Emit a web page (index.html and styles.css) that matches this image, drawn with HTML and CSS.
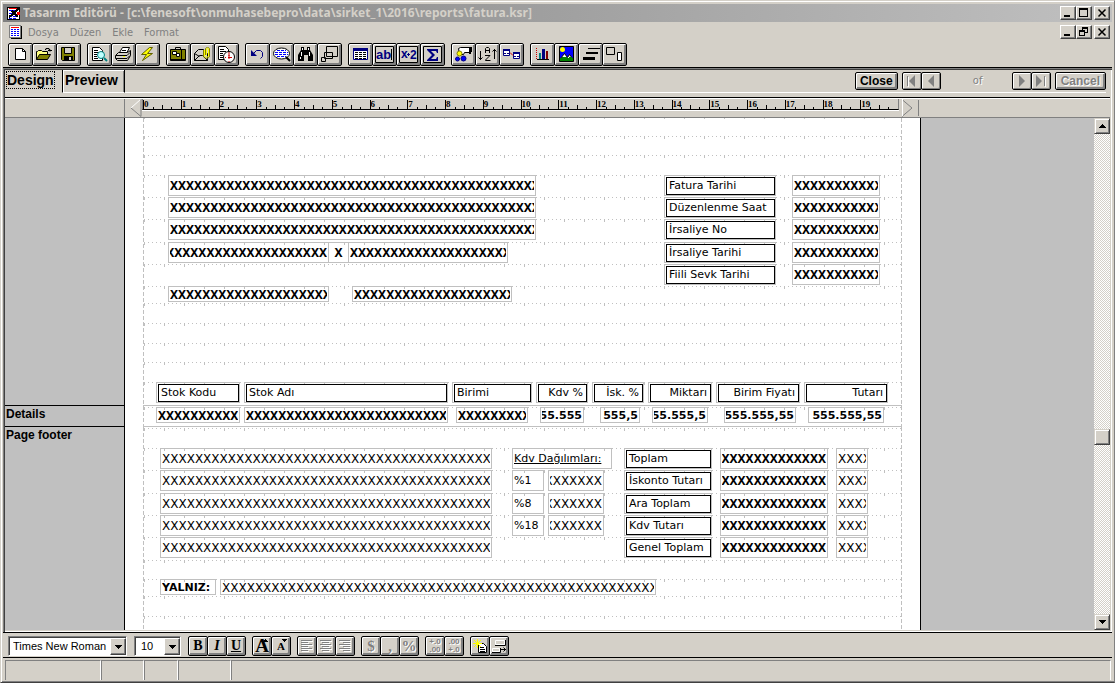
FILE: index.html
```html
<!DOCTYPE html>
<html lang="tr">
<head>
<meta charset="utf-8">
<title>Tasarım Editörü</title>
<link rel="stylesheet" href="styles.css">
</head>
<body>
<div class="window">
  <header class="titlebar">
    <svg class="app-icon" width="15" height="15" viewBox="0 0 15 15" shape-rendering="crispEdges"><path fill="#fff" stroke="#000" d="M1.500 1.500h12v12h-12z"/><path stroke="#00f" stroke-dasharray="3 1" d="M3 4.500h8M3 7.500h5M3 10.500h8M3 12.500h8"/><path stroke="#f00" d="M3 2.500h8"/><path stroke="#000" stroke-width="2" d="M13 2L7 8l-4 3M6 5l6 6"/><path fill="#f00" d="M11 6h3v3h-3z"/></svg>
    <h1>Tasarım Editörü - [c:\fenesoft\onmuhasebepro\data\sirket_1\2016\reports\fatura.ksr]</h1>
    <div class="controls">
      <button class="ctl" aria-label="Simge durumuna küçült"><svg width="12" height="10" viewBox="0 0 12 10"><path d="M2 7h6v2H2z"/></svg></button>
      <button class="ctl" aria-label="Ekranı kapla"><svg width="12" height="10" viewBox="0 0 12 10"><path d="M1 0h9v9H1zM2 2v6h7V2z" fill-rule="evenodd"/></svg></button>
      <button class="ctl last" aria-label="Kapat"><svg width="12" height="10" viewBox="0 0 12 10"><path fill="none" stroke="#000" stroke-width="1.500" d="M2.500 1.500l7 7M9.500 1.500l-7 7"/></svg></button>
    </div>
  </header>
  <nav class="menubar">
    <svg class="doc-icon" width="14" height="14" viewBox="0 0 14 14" shape-rendering="crispEdges"><path fill="#fff" stroke="#808080" d="M.5.5h11v12H.5z"/><path fill="none" stroke="#000" d="M12.500 1v12.500H2"/><path stroke="#f00" d="M2 2.500h8"/><path stroke="#00f" stroke-dasharray="2 1" d="M2 4.500h8M2 6.500h8M2 8.500h8M2 10.500h8"/></svg>
    <button>Dosya</button><button>Düzen</button><button>Ekle</button><button>Format</button>
    <div class="controls">
      <button class="ctl" aria-label="Belgeyi küçült"><svg width="12" height="10" viewBox="0 0 12 10"><path d="M2 7h6v2H2z"/></svg></button>
      <button class="ctl" aria-label="Belgeyi geri yükle"><svg width="12" height="10" viewBox="0 0 12 10" fill="none" stroke="#000" shape-rendering="crispEdges"><path d="M4 .5h6M4.500 0v3M9.500 0v6M7 5.500h3M4 1.500h6M1 4.500h6M1 3.500h6M1.500 3v6M6.500 3v6M1 8.500h6"/></svg></button>
      <button class="ctl last" aria-label="Belgeyi kapat"><svg width="12" height="10" viewBox="0 0 12 10"><path fill="none" stroke="#000" stroke-width="1.500" d="M2.500 1.500l7 7M9.500 1.500l-7 7"/></svg></button>
    </div>
  </nav>
  <div class="toolbar" role="toolbar">
    <div class="group">
      <button class="tool" aria-label="Yeni"><svg viewBox="0 0 19 17"><path fill="#fff" stroke="#000" d="M4.500 2.500h7l3 3v8h-10z"/><path fill="none" stroke="#000" d="M11.500 2.500v3h3"/></svg></button>
      <button class="tool" aria-label="Aç"><svg viewBox="0 0 19 17"><path fill="#ffff80" stroke="#000" d="M1.500 13.500v-8h1l1-1h3l1 1h5v3"/><path fill="#808000" stroke="#000" d="M1.500 13.500l3-5h11l-3 5z"/><path fill="none" stroke="#000" d="M10 3.500h1v-1h3v1h1v2M13 4.500h4"/></svg></button>
      <button class="tool" aria-label="Kaydet"><svg viewBox="0 0 19 17"><path fill="#808000" stroke="#000" d="M2.500 1.500h13v13h-12l-1-1z"/><path fill="#d4d0c8" stroke="#000" d="M5.500 1.500h7v6h-7z"/><path d="M5 10h9v5H5z"/><path fill="#d4d0c8" d="M10 11h2v3h-2z"/></svg></button>
    </div>
    <div class="group">
      <button class="tool" aria-label="Önizleme"><svg viewBox="0 0 19 17"><path fill="#fff" stroke="#000" d="M2.500 1.500h7l3 3v10h-10z"/><path stroke="#000" d="M4 4.500h4M4 6.500h6M4 8.500h3M4 10.500h3M4 12.500h4"/><circle cx="11" cy="9" r="3.500" fill="#c0ffff" stroke="#008080"/><path stroke="#008080" stroke-width="2" d="M14 12l3 3"/></svg></button>
      <button class="tool" aria-label="Yazdır"><svg viewBox="0 0 19 17"><path fill="#fff" stroke="#000" d="M5.500 6.500l3-5h7l-3 6z"/><path stroke="#000" d="M8 4.500h4M7 6.500h4"/><path fill="#d4d0c8" stroke="#000" d="M1.500 9.500l3-3h9l3-2v5l-3 5h-10l-2-2z"/><path fill="none" stroke="#000" d="M2 9.500h11l3-3M2 12.500h11l3-3"/><path fill="#ff0" d="M9 10h2v1H9z"/></svg></button>
      <button class="tool" aria-label="Çalıştır"><svg viewBox="0 0 19 17"><path fill="#ff0" stroke="#606000" d="M11.500 1.500l-8 7h5l-4 6 10-7h-5l5-6z"/></svg></button>
    </div>
    <div class="group">
      <button class="tool" aria-label="Çanta"><svg viewBox="0 0 19 17"><path fill="none" stroke="#000" d="M6.500 3v-1.500h5V3"/><path fill="#808000" stroke="#000" d="M1.500 3.500h15v11h-15z"/><path stroke="#000" d="M12.500 4v10M2 13.500h14"/><path fill="#fff" stroke="#000" d="M3.500 5.500h4v3h-4zM7.500 7.500h3v3h-3z"/></svg></button>
      <button class="tool" aria-label="Ek"><svg viewBox="0 0 19 17"><path fill="#d4d0c8" stroke="#000" d="M1.500 7.500l4-4h5l4 4v7h-13z"/><path fill="none" stroke="#000" d="M1.500 14.500l5-5h3l5 5M1.500 7.500l5 3"/><path fill="none" stroke="#808000" d="M10.500 4v6c0 3 6 3 6 0V3c0-2-4-2-4 0v6"/><path fill="none" stroke="#ff0" d="M11.500 4v6c0 1.500 4 1.500 4 0V3c0-1-2-1-2 0v6"/></svg></button>
      <button class="tool" aria-label="Zamanla"><svg viewBox="0 0 19 17"><path fill="#fff" stroke="#000" d="M1.500.5h7l3 3v10h-10z"/><path stroke="#000" d="M3 3.500h4M3 5.500h6M3 7.500h3M3 9.500h3M3 11.500h3"/><circle cx="12" cy="11" r="5.500" fill="#fff" stroke="#000"/><path fill="none" stroke="#c00" d="M12 7v4.500h3"/><path stroke="#c00" stroke-dasharray="1 2" d="M8 11.500h9M12 6v10"/></svg></button>
    </div>
    <div class="group">
      <button class="tool" aria-label="Geri al"><svg viewBox="0 0 19 17"><path fill="#000080" d="M3 4v6h6z"/><path fill="none" stroke="#000080" d="M5.500 7.500l3-3h4l2 2v4l-2 2"/></svg></button>
      <button class="tool" aria-label="Sorgu"><svg viewBox="0 0 19 17"><ellipse cx="9.500" cy="7.500" rx="8" ry="5.500" fill="#fff" stroke="#000"/><path stroke="#00f" stroke-dasharray="3 1" d="M5 4.500h9M3 6.500h13M3 8.500h13M5 10.500h9"/><path stroke="#000" stroke-width="2" d="M14 11l4 4"/></svg></button>
      <button class="tool" aria-label="Bul"><svg viewBox="0 0 19 17"><path d="M5 1h3v3h3V1h3v3l3 5v6h-5V9H8v6H2V9l3-5z"/><path fill="#fff" d="M6 2h1v2H6zM12 2h1v2h-1zM5 6h1v4H5zM13 6h1v4h-1zM4 11h1v2H4z"/></svg></button>
      <button class="tool" aria-label="Düzenle"><svg viewBox="0 0 19 17"><path fill="#d4d0c8" stroke="#000" d="M6.500.5h11v10h-11zM4.500 6.500h8v6h-8zM1.500 11.500h4v4h-4z"/></svg></button>
    </div>
    <div class="group">
      <button class="tool" aria-label="Tablo"><svg viewBox="0 0 19 17"><path fill="#fff" stroke="#000080" d="M2.500 2.500h14v11h-14z"/><path fill="#000080" d="M2 2h15v3H2z"/><path stroke="#000" stroke-dasharray="3 1" d="M4 6.500h11M4 8.500h11M4 10.500h11M4 12.500h11"/></svg></button>
      <button class="tool" aria-label="Metin alanı"><svg viewBox="0 0 19 17"><path fill="none" stroke="#000" d="M.5.5h18v16H.5z"/><text x="1" y="13">ab</text><path stroke="#000" d="M16.500 3v11"/></svg></button>
      <button class="tool" aria-label="Hesaplanan alan"><svg viewBox="0 0 19 17"><path fill="none" stroke="#000" d="M.5.5h18v16H.5z"/><text x="2" y="12" class="small">x</text><path fill="#000080" d="M8 8h3v1H8zM9 7h1v3H9z"/><text x="11" y="13" class="small">2</text></svg></button>
      <button class="tool" aria-label="Toplam"><svg viewBox="0 0 19 17"><path fill="none" stroke="#000" d="M.5.5h18v16H.5z"/><path fill="#000080" d="M4 3h11v4h-1l-1-2H8l4 4-4 4h5l1-2h1v4H4v-1l5-5-5-5z"/></svg></button>
    </div>
    <div class="group">
      <button class="tool" aria-label="Grupla"><svg viewBox="0 0 19 17"><path fill="#fff" stroke="#000" d="M4.500 2.500l2-1h10v5h-6l-1 2h-4z"/><path d="M15 1h3v5h-1v2h-2z"/><circle cx="5.500" cy="7.500" r="2.500" fill="#ff0" stroke="#808000"/><circle cx="3.500" cy="13" r="2" fill="#00f" stroke="#000080"/><circle cx="9.500" cy="12.500" r="2.500" fill="#00f" stroke="#000080"/></svg></button>
      <button class="tool" aria-label="Sırala"><svg viewBox="0 0 19 17"><path fill="none" stroke="#000" d="M2.500 5v9M.5 11.500l2 2 2-2M16.500 3v10M14.500 5.500l2-2 2 2M7.500 7V2.500l1-1h2l1 1V7M8 4.500h3M7 9.500h5L7.500 14v.5H12.500"/></svg></button>
      <button class="tool" aria-label="İlişkiler"><svg viewBox="0 0 19 17"><path fill="#fff" stroke="#000080" d="M1.500 3.500h6v6h-6zM11.500 6.500h6v6h-6z"/><path fill="#000080" d="M1 3h7v2H1zM11 6h7v2h-7z"/><path stroke="#000080" stroke-dasharray="2 1" d="M2 7.500h5M12 10.500h5"/><path stroke="#c00" d="M8 6.500l3 3"/></svg></button>
    </div>
    <div class="group">
      <button class="tool" aria-label="Grafik"><svg viewBox="0 0 19 17"><path stroke="#c00" stroke-dasharray="1 1" d="M3.500 2v12"/><path stroke="#000" d="M4 13.500h12"/><path fill="#008080" d="M6 7h2v6H6z"/><path fill="#000080" d="M9 3h3v10H9z"/><path fill="#800000" d="M13 5h2v8h-2z"/></svg></button>
      <button class="tool" aria-label="Resim"><svg viewBox="0 0 19 17"><path fill="#00f" stroke="#000" d="M2.500.5h14v15h-14z"/><path fill="#fff" stroke="#000" d="M3.500 12.500l4-5 3 4 2-3 3 4z"/><path fill="#008000" d="M3 12h13v3H3zM5 11h5v2H5zM12 11h3v2h-3z"/><circle cx="5.500" cy="3.500" r="2.500" fill="#ff0"/></svg></button>
      <button class="tool" aria-label="Çizgi"><svg viewBox="0 0 19 17"><path d="M7 2h12v1H7zM5 6h12v2H5zM2 11h12v3H2z"/></svg></button>
      <button class="tool" aria-label="Şekil"><svg viewBox="0 0 19 17"><path fill="#d4d0c8" stroke="#000" d="M1.500 1.500h8v7h-8z"/><path fill="#fff" stroke="#000" d="M12.500 6.500h4v8h-4z"/></svg></button>
    </div>
  </div>

  <main class="mdi">
    <div class="viewbar">
      <div class="tabs" role="tablist">
        <button class="tab active" role="tab" aria-selected="true"><span>Design</span></button>
        <button class="tab" role="tab" aria-selected="false">Preview</button>
      </div>
      <div class="pager">
        <button class="push close">Close</button>
        <div class="pair">
          <button class="nav" aria-label="İlk sayfa" disabled><svg width="14" height="14" viewBox="0 0 14 14"><path stroke="#fff" d="M3.500 3v10"/><path fill="#808080" d="M2 2h1v10H2zM10 1v12L4 7z"/></svg></button>
          <button class="nav" aria-label="Önceki sayfa" disabled><svg width="14" height="14" viewBox="0 0 14 14"><path fill="#808080" d="M10 1v12L4 7z"/></svg></button>
        </div>
        <span class="of">of</span>
        <div class="pair">
          <button class="nav" aria-label="Sonraki sayfa" disabled><svg width="14" height="14" viewBox="0 0 14 14"><path fill="#808080" d="M4 1v12l6-6z"/></svg></button>
          <button class="nav" aria-label="Son sayfa" disabled><svg width="14" height="14" viewBox="0 0 14 14"><path fill="#808080" d="M2 1v12l6-6zM10 2h1v10h-1z"/><path stroke="#fff" d="M11.500 3v10"/></svg></button>
        </div>
        <button class="push" disabled>Cancel</button>
      </div>
    </div>
    <div class="rulerbar">
      <div class="corner"></div>
      <svg class="handle" width="17" height="18" viewBox="0 0 17 18" fill="none"><path stroke="#fff" d="M6 9l10-9"/><path stroke="#808080" d="M6 9l10 8.500V0"/></svg>
      <div class="ruler"><span>0</span><span>1</span><span>2</span><span>3</span><span>4</span><span>5</span><span>6</span><span>7</span><span>8</span><span>9</span><span>10</span><span>11</span><span>12</span><span>13</span><span>14</span><span>15</span><span>16</span><span>17</span><span>18</span><span>19</span></div>
      <svg class="handle end" width="19" height="18" viewBox="0 0 19 18" fill="none"><path stroke="#808080" d="M2 .5l10 8.500"/><path stroke="#808080" d="M12 9L2 17.500"/><path stroke="#fff" d="M2.500 17V0"/><path stroke="#808080" d="M18.500 1v16"/></svg>
    </div>
    <div class="work">
      <div class="bands">
        <section class="band">
          <h2></h2>
          <div class="paper"><div class="print">
            <div class="row r18 top"></div><div class="row r19"></div><div class="row r20"></div><div class="row r22"></div><div class="row r22"></div><div class="row r23"></div><div class="row r22"></div><div class="row r22"></div><div class="row r17"></div><div class="row r20"></div><div class="row r20"></div><div class="row r19"></div><div class="row r20"></div><div class="row r23"></div>
            <span class="field bold xs h1 addr">XXXXXXXXXXXXXXXXXXXXXXXXXXXXXXXXXXXXXXXXXXXXXX</span>
            <span class="field bold xs h2 addr">XXXXXXXXXXXXXXXXXXXXXXXXXXXXXXXXXXXXXXXXXXXXXX</span>
            <span class="field bold xs h3 addr">XXXXXXXXXXXXXXXXXXXXXXXXXXXXXXXXXXXXXXXXXXXXXX</span>
            <span class="field bold xs h4 town end">XXXXXXXXXXXXXXXXXXXX</span>
            <span class="field bold xs h4 slash mid">X</span>
            <span class="field bold xs h4 city">XXXXXXXXXXXXXXXXXXXX</span>
            <span class="field bold xs h6 town">XXXXXXXXXXXXXXXXXXXX</span>
            <span class="field bold xs h6 taxno">XXXXXXXXXXXXXXXXXXXX</span>
            <span class="field box h1 info"><b>Fatura Tarihi</b></span><span class="field bold xs h1 date">XXXXXXXXXXX</span>
            <span class="field box h2 info"><b>Düzenlenme Saat</b></span><span class="field bold xs h2 date">XXXXXXXXXXX</span>
            <span class="field box h3 info"><b>İrsaliye No</b></span><span class="field bold xs h3 date">XXXXXXXXXXX</span>
            <span class="field box h4 info"><b>İrsaliye Tarihi</b></span><span class="field bold xs h4 date">XXXXXXXXXXX</span>
            <span class="field box h5 info"><b>Fiili Sevk Tarihi</b></span><span class="field bold xs h5 date">XXXXXXXXXXX</span>
            <span class="field box h7 code"><b>Stok Kodu</b></span>
            <span class="field box h7 name"><b>Stok Adı</b></span>
            <span class="field box h7 unit"><b>Birimi</b></span>
            <span class="field box right h7 vat"><b>Kdv %</b></span>
            <span class="field box right h7 disc"><b>İsk. %</b></span>
            <span class="field box right h7 qty"><b>Miktarı</b></span>
            <span class="field box right h7 price"><b>Birim Fiyatı</b></span>
            <span class="field box right h7 amount"><b>Tutarı</b></span>
          </div></div>
        </section>
        <section class="band">
          <h2>Details</h2>
          <div class="paper"><div class="print pad">
            <div class="row r19"></div>
            <span class="field bold xs d1 code">XXXXXXXXXX</span>
            <span class="field bold xs d1 name">XXXXXXXXXXXXXXXXXXXXXXXXX</span>
            <span class="field bold xs d1 unit-v">XXXXXXXXX</span>
            <span class="field bold end d1 vat-v">555.555</span>
            <span class="field bold end d1 disc-v">555,5</span>
            <span class="field bold end d1 qty-v">555.555,5</span>
            <span class="field bold end d1 price-v">555.555,55</span>
            <span class="field bold end d1 amount-v">555.555,55</span>
          </div></div>
        </section>
        <section class="band last">
          <h2>Page footer</h2>
          <div class="paper"><div class="print pad">
            <div class="row r20"></div><div class="row r22"></div><div class="row r23"></div><div class="row r22"></div><div class="row r22"></div><div class="row r23"></div><div class="row r19"></div><div class="row r17"></div><div class="row r20"></div><div class="row r14"></div>
            <span class="field mask f1 note">XXXXXXXXXXXXXXXXXXXXXXXXXXXXXXXXXXXXXXXXX</span>
            <span class="field mask f2 note">XXXXXXXXXXXXXXXXXXXXXXXXXXXXXXXXXXXXXXXXX</span>
            <span class="field mask f3 note">XXXXXXXXXXXXXXXXXXXXXXXXXXXXXXXXXXXXXXXXX</span>
            <span class="field mask f4 note">XXXXXXXXXXXXXXXXXXXXXXXXXXXXXXXXXXXXXXXXX</span>
            <span class="field mask f5 note">XXXXXXXXXXXXXXXXXXXXXXXXXXXXXXXXXXXXXXXXX</span>
            <span class="field f1 spread"><u>Kdv Dağılımları:</u></span>
            <span class="field f2 rate">%1</span><span class="field mask end f2 rate-v">XXXXXXX</span>
            <span class="field f3 rate">%8</span><span class="field mask end f3 rate-v">XXXXXXX</span>
            <span class="field f4 rate">%18</span><span class="field mask end f4 rate-v">XXXXXXX</span>
            <span class="field box f1 total"><b>Toplam</b></span><span class="field bold xs end f1 total-v">XXXXXXXXXXXXX</span><span class="field mask f1 cur">XXXX</span>
            <span class="field box f2 total"><b>İskonto Tutarı</b></span><span class="field bold xs end f2 total-v">XXXXXXXXXXXXX</span><span class="field mask f2 cur">XXXX</span>
            <span class="field box f3 total"><b>Ara Toplam</b></span><span class="field bold xs end f3 total-v">XXXXXXXXXXXXX</span><span class="field mask f3 cur">XXXX</span>
            <span class="field box f4 total"><b>Kdv Tutarı</b></span><span class="field bold xs end f4 total-v">XXXXXXXXXXXXX</span><span class="field mask f4 cur">XXXX</span>
            <span class="field box f5 total"><b>Genel Toplam</b></span><span class="field bold xs end f5 total-v">XXXXXXXXXXXXX</span><span class="field mask f5 cur">XXXX</span>
            <span class="field bold f6 only">YALNIZ:</span><span class="field mask f6 words">XXXXXXXXXXXXXXXXXXXXXXXXXXXXXXXXXXXXXXXXXXXXXXXXXXXXX</span>
          </div></div>
        </section>
      </div>
      <div class="scrollbar">
        <button class="sb" aria-label="Yukarı kaydır"><svg width="7" height="4" viewBox="0 0 7 4"><path d="M3 0h1v1h1v1h1v1h1v1H0V3h1V2h1V1h1z"/></svg></button>
        <div class="track above"></div>
        <div class="sb thumb"></div>
        <div class="track below"></div>
        <button class="sb" aria-label="Aşağı kaydır"><svg width="7" height="4" viewBox="0 0 7 4"><path d="M0 0h7v1H6v1H5v1H4v1H3V3H2V2H1V1H0z"/></svg></button>
      </div>
    </div>
  </main>

  <div class="formatbar" role="toolbar">
    <div class="combo face"><select aria-label="Yazı tipi"><option>Times New Roman</option></select><span class="arrow"><svg width="7" height="4" viewBox="0 0 7 4"><path d="M0 0h7v1H6v1H5v1H4v1H3V3H2V2H1V1H0z"/></svg></span></div>
    <div class="combo size"><select aria-label="Yazı boyutu"><option>10</option></select><span class="arrow"><svg width="7" height="4" viewBox="0 0 7 4"><path d="M0 0h7v1H6v1H5v1H4v1H3V3H2V2H1V1H0z"/></svg></span></div>
    <div class="group">
      <button class="fmt b">B</button><button class="fmt i">I</button><button class="fmt u">U</button>
    </div>
    <div class="group">
      <button class="fmt big" aria-label="Yazıyı büyüt">A<svg class="mark" width="5" height="3" viewBox="0 0 5 3"><path d="M2 0h1v1h1v1h1v1H0V2h1V1h1z"/></svg></button><button class="fmt tiny" aria-label="Yazıyı küçült">A<svg class="mark" width="5" height="3" viewBox="0 0 5 3"><path d="M0 0h5v1H4v1H3v1H2V2H1V1H0z"/></svg></button>
    </div>
    <div class="group">
      <button class="fmt" aria-label="Sola hizala" disabled><svg width="14" height="14" viewBox="0 0 14 14"><path stroke="#fff" d="M2 2.500h11M2 4.500h7M2 6.500h11M2 8.500h7M2 10.500h11M2 12.500h7"/><path stroke="#808080" d="M1 1.500h11M1 3.500h7M1 5.500h11M1 7.500h7M1 9.500h11M1 11.500h7"/></svg></button>
      <button class="fmt" aria-label="Ortala" disabled><svg width="14" height="14" viewBox="0 0 14 14"><path stroke="#fff" d="M2 2.500h11M4 4.500h7M2 6.500h11M4 8.500h7M2 10.500h11M4 12.500h7"/><path stroke="#808080" d="M1 1.500h11M3 3.500h7M1 5.500h11M3 7.500h7M1 9.500h11M3 11.500h7"/></svg></button>
      <button class="fmt" aria-label="Sağa hizala" disabled><svg width="14" height="14" viewBox="0 0 14 14"><path stroke="#fff" d="M2 2.500h11M6 4.500h7M2 6.500h11M6 8.500h7M2 10.500h11M6 12.500h7"/><path stroke="#808080" d="M1 1.500h11M5 3.500h7M1 5.500h11M5 7.500h7M1 9.500h11M5 11.500h7"/></svg></button>
    </div>
    <div class="group">
      <button class="fmt sym" disabled>$</button><button class="fmt sym" disabled>,</button><button class="fmt sym" disabled>%</button>
    </div>
    <div class="group">
      <button class="fmt dec" aria-label="Ondalık artır" disabled><span>+.0</span><span>.00</span></button><button class="fmt dec" aria-label="Ondalık azalt" disabled><span>.00</span><span>+.0</span></button>
    </div>
    <div class="group">
      <button class="fmt" aria-label="Yeni stil"><svg width="16" height="15" viewBox="0 0 16 15"><path fill="#fff" stroke="#000" d="M6.500 4.500h5l3 3v6h-8z"/><path stroke="#000" d="M8 8.500h4M8 10.500h5M8 12.500h5"/><path stroke="#ff0" d="M5.500 0v9M1 4.500h9M2 1l7 7M9 1L2 8"/></svg></button>
      <button class="fmt" aria-label="Nesne özellikleri"><svg width="16" height="15" viewBox="0 0 16 15"><path fill="#d4d0c8" stroke="#fff" d="M4.500 1.500h9v4h-9zM1.500 9.500h7v3h-7z"/><path fill="none" stroke="#000" d="M4 6.500h10.500V1M1 13.500h8.500V9M10 10.500h5M12.500 8.500l2 2-2 2"/></svg></button>
    </div>
  </div>
  <footer class="statusbar"><div class="s1"></div><div class="s2"></div><div class="s3"></div><div class="s4"></div><div class="s5"></div></footer>
</div>
</body>
</html>
```

FILE: styles.css
```css
:root {
  --face: #d4d0c8;
  --desk: #c0c0c0;
  --shade: #808080;
  --dark: #404040;
}

* { box-sizing: border-box; }

body {
  margin: 0;
  background: var(--face);
  color: #000;
  font: 11px "DejaVu Sans Condensed", "DejaVu Sans", sans-serif;
}

button, select {
  margin: 0;
  padding: 0;
  border: 0;
  border-radius: 0;
  background: var(--face);
  color: #000;
  font: inherit;
}

svg { display: block; flex: none; }

.window {
  display: flex;
  flex-direction: column;
  min-height: 100vh;
  border: 1px solid var(--face);
  border-right-color: var(--shade);
  border-bottom-color: var(--dark);
  box-shadow: inset 1px 1px #fff, inset 0 -1px var(--shade);
  padding: 3px 2px 2px 2px;
}

/* title and menu */
.titlebar {
  display: flex;
  align-items: center;
  gap: 2px;
  height: 18px;
  padding: 0 2px 0 3px;
  background: linear-gradient(to right, #808080, #c0c0c0);
}

.titlebar h1 {
  flex: 1;
  margin: 0;
  color: var(--face);
  font: bold 12px/18px "Noto Sans", sans-serif;
  white-space: nowrap;
  overflow: hidden;
}

.controls { display: flex; margin-left: auto; }

.ctl {
  display: flex;
  width: 16px;
  height: 14px;
  padding: 1px;
  border: 1px solid;
  border-color: #fff var(--dark) var(--dark) #fff;
  box-shadow: inset -1px -1px var(--shade);
}

.ctl.last { margin-left: 2px; }

.menubar {
  display: flex;
  align-items: center;
  height: 20px;
  padding: 0 2px 0 6px;
}

.menubar > button {
  margin-right: 11px;
  color: var(--shade);
}

.doc-icon { margin-right: 5px; }

/* main toolbar */
.toolbar {
  display: flex;
  gap: 6px;
  height: 25px;
  padding: 1px 5px;
}

.group { display: flex; }

.tool {
  width: 25px;
  height: 23px;
  border: 1px solid #000;
  border-radius: 2px;
  padding: 2px;
  box-shadow: inset 1px 1px #fff, inset -2px -2px var(--shade);
}

.tool + .tool, .fmt + .fmt, .nav + .nav { margin-left: -1px; }

.tool svg { width: 19px; height: 17px; }

.tool text {
  fill: #000080;
  font: bold 13px "Liberation Sans", sans-serif;
}

.tool text.small { font-size: 12px; }

/* document window */
.mdi {
  flex: 1;
  display: flex;
  flex-direction: column;
  border-top: 1px solid #000;
  padding: 2px;
  box-shadow: inset 1px 1px var(--shade), inset 2px 2px var(--dark), inset -1px -1px #fff;
}

.viewbar {
  display: flex;
  justify-content: space-between;
  height: 27px;
  padding-right: 4px;
}

.tabs {
  display: flex;
  flex: 1;
  height: 23px;
}

.tabs::after {
  content: "";
  flex: 1;
  border-bottom: 1px solid #fff;
}

.tab {
  display: flex;
  align-items: flex-start;
  height: 23px;
  padding: 2px;
  font: bold 14px/16px "Liberation Sans", sans-serif;
}

.tab.active { width: 57px; }

.tab.active span { outline: 1px dotted #000; }

.tab:not(.active) {
  width: 63px;
  border: solid #000;
  border-width: 0 1px;
  border-bottom: 1px solid #fff;
  box-shadow: inset 1px 1px #fff, inset -1px 0 var(--shade);
}

.pager {
  display: flex;
  align-items: flex-start;
  gap: 4px;
  height: 23px;
  padding-top: 2px;
  border-bottom: 1px solid #fff;
}

.push, .nav {
  display: flex;
  align-items: center;
  justify-content: center;
  height: 18px;
  border: 1px solid #000;
  border-radius: 2px;
  box-shadow: inset 1px 1px #fff, inset -2px -2px var(--shade);
  font: bold 12px "Liberation Sans", sans-serif;
}

.push { padding: 0 5px; }
.push.close { padding: 0 4px; }
.push:disabled, .fmt:disabled { color: var(--shade); text-shadow: 1px 1px #fff; }
.pair { display: flex; }
.nav { width: 20px; box-shadow: inset 1px 1px #fff, inset -1px -1px var(--shade); }

.of {
  width: 63px;
  padding-left: 3px;
  line-height: 18px;
  text-align: center;
  color: var(--shade);
  text-shadow: 1px 1px #fff;
}

.rulerbar {
  display: flex;
  height: 21px;
  border-top: 1px solid #000;
  border-bottom: 1px solid var(--shade);
  box-shadow: inset 0 1px #fff;
}

.corner { width: 120px; border-right: 1px solid var(--shade); margin-top: 1px; }
.handle { margin-top: 1px; }

.ruler {
  display: flex;
  width: 757px;
  height: 11px;
  margin-top: 1px;
  border-left: 1px solid var(--shade);
  border-right: 1px solid var(--shade);
  border-bottom: 1px solid #000;
  box-shadow: 0 1px #fff;
}

.handle.end { margin-left: 1px; }

.ruler span {
  flex: 1;
  height: 9px;
  margin-top: 1px;
  border-left: 1px solid #000;
  background:
    linear-gradient(#000, #000) 25% 100% / 1px 2px no-repeat,
    linear-gradient(#000, #000) 50% 100% / 1px 4px no-repeat,
    linear-gradient(#000, #000) 75% 100% / 1px 2px no-repeat;
  font: bold 9px/8px "Liberation Serif", serif;
}

.work { flex: 1; display: flex; background: var(--desk); }
.bands { flex: 1; display: flex; flex-direction: column; min-width: 0; }
.band { display: flex; }
.band.last { flex: 1; }

.band h2 {
  width: 120px;
  margin: 0;
  padding: 2px 1px;
  border-right: 1px solid #000;
  border-bottom: 1px solid #000;
  font: bold 12px/12px "Liberation Sans", sans-serif;
}

.band.last h2, .band.last .print { border-bottom: 0; }

.paper {
  width: 796px;
  padding-left: 18px;
  border-right: 1px solid #000;
  background: #fff;
}

.print {
  position: relative;
  width: 759px;
  padding: 0 1px;
  border-bottom: 1px solid var(--desk);
  background:
    repeating-linear-gradient(var(--desk) 0 4px, transparent 4px 6px) 0 0 / 1px 100% no-repeat,
    repeating-linear-gradient(var(--desk) 0 4px, transparent 4px 6px) 100% 0 / 1px 100% no-repeat;
}

.print.pad { padding-top: 1px; }

/* one grid line: dots every 4px, ticks every 20px */
.row {
  background:
    linear-gradient(to right, var(--desk) 1px, transparent 1px) 0 0 / 20px 3px repeat-x,
    linear-gradient(to right, var(--desk) 1px, transparent 1px) 0 0 / 4px 1px repeat-x;
}

.row.top { background: linear-gradient(to right, var(--desk) 1px, transparent 1px) 0 0 / 20px 1px repeat-x; }

.r14 { height: 14px; }
.r17 { height: 17px; }
.r18 { height: 18px; }
.r19 { height: 19px; }
.r20 { height: 20px; }
.r22 { height: 22px; }
.r23 { height: 23px; }

/* report objects, placed freely on the sheet */
.field {
  position: absolute;
  display: flex;
  align-items: center;
  height: 21px;
  padding: 1px 1px 0;
  border: 1px solid var(--desk);
  overflow: clip;
  overflow-clip-margin: content-box;
  font: 11px/14px "DejaVu Sans", sans-serif;
  white-space: nowrap;
}

.bold { font-weight: bold; }
.xs { font-family: "Noto Sans", sans-serif; font-size: 12px; }
.mask { font-size: 12px; }
.end { justify-content: flex-end; }
.mid { justify-content: center; }
.box { padding: 1px 0 0 1px; }

.box b {
  flex: 1;
  display: flex;
  align-items: center;
  align-self: stretch;
  min-width: 0;
  padding: 0 2px;
  border: 1px solid #000;
  overflow: clip;
  font-weight: normal;
}

.box.right b { justify-content: flex-end; padding-right: 3px; }

.h1 { top: 57px; }
.h2 { top: 79px; }
.h3 { top: 101px; }
.h4 { top: 124px; }
.h5 { top: 146px; }
.h6 { top: 168px; height: 16px; }
.h7 { top: 264px; }
.d1 { top: 1px; height: 16px; }
.f1 { top: 21px; }
.f2 { top: 43px; }
.f3 { top: 66px; }
.f4 { top: 88px; }
.f5 { top: 110px; }
.f6 { top: 152px; height: 16px; }

.addr { left: 25px; width: 368px; }
.town { left: 25px; width: 161px; }
.slash { left: 185px; width: 21px; }
.city { left: 205px; width: 160px; }
.taxno { left: 209px; width: 160px; }
.info { left: 521px; width: 112px; }
.date { left: 649px; width: 88px; }
.code { left: 13px; width: 84px; }
.name { left: 101px; width: 204px; }
.unit { left: 309px; width: 80px; }
.vat { left: 393px; width: 52px; }
.disc { left: 449px; width: 52px; }
.qty { left: 505px; width: 64px; }
.price { left: 573px; width: 84px; }
.amount { left: 661px; width: 84px; }
.unit-v { left: 313px; width: 72px; }
.vat-v { left: 397px; width: 44px; }
.disc-v { left: 457px; width: 40px; }
.qty-v { left: 509px; width: 56px; }
.price-v { left: 581px; width: 72px; }
.amount-v { left: 665px; width: 76px; }
.note { left: 17px; width: 332px; }
.spread { left: 369px; width: 100px; }
.rate { left: 369px; width: 32px; }
.rate-v { left: 405px; width: 56px; }
.total { left: 481px; width: 88px; }
.total-v { left: 577px; width: 108px; }
.cur { left: 693px; width: 32px; }
.only { left: 17px; width: 56px; }
.words { left: 77px; width: 436px; }

/* scroll bar */
.scrollbar { display: flex; flex-direction: column; width: 16px; }

.sb {
  display: flex;
  align-items: center;
  justify-content: center;
  height: 16px;
  border: 1px solid;
  border-color: var(--face) var(--dark) var(--dark) var(--face);
  background: var(--face);
  box-shadow: inset 1px 1px #fff, inset -1px -1px var(--shade);
}

.track { background: repeating-conic-gradient(#fff 0 25%, var(--face) 0 50%) 0 0 / 2px 2px; }
.above { flex: 296; }
.below { flex: 169; }

/* format bar */
.formatbar {
  display: flex;
  gap: 6px;
  height: 26px;
  padding: 3px 5px;
  border: solid #000;
  border-width: 1px 0;
}

.combo {
  display: grid;
  height: 20px;
  border: 1px solid;
  border-color: var(--shade) #fff #fff var(--shade);
  box-shadow: inset 1px 1px var(--dark);
  background: #fff;
}

.combo.face { width: 119px; }
.combo.size { width: 47px; margin: 0 1px; }
.combo select, .arrow { grid-area: 1 / 1; }

.combo select {
  appearance: none;
  padding-left: 3px;
  margin: 1px;
  background: transparent;
  font: 11px "Liberation Sans", sans-serif;
}

.combo.size select { padding-left: 5px; }

.arrow {
  justify-self: end;
  display: flex;
  align-items: center;
  justify-content: center;
  width: 16px;
  margin: 1px 0 0;
  border: 1px solid;
  border-color: #fff var(--dark) var(--dark) #fff;
  box-shadow: inset -1px -1px var(--shade);
  background: var(--face);
  pointer-events: none;
}

.fmt {
  position: relative;
  display: flex;
  align-items: center;
  justify-content: center;
  width: 20px;
  height: 20px;
  border: 1px solid #000;
  border-radius: 2px;
  box-shadow: inset 1px 1px #fff, inset -2px -2px var(--shade);
  font: bold 14px/14px "Liberation Serif", serif;
}

.fmt.i { font-style: italic; }
.fmt.u { text-decoration: underline; }
.fmt.big { font-size: 19px; }
.fmt.tiny { font-size: 11px; }
.fmt.sym { font-size: 15px; }
.mark { position: absolute; top: 2px; right: 3px; }

.fmt.dec {
  flex-direction: column;
  font: bold 8px/8px "Liberation Sans", sans-serif;
}

/* status bar */
.statusbar {
  display: flex;
  height: 22px;
  padding: 2px 1px 0 2px;
}

.statusbar div {
  border: solid;
  border-width: 1px 1px 0 1px;
  border-color: var(--shade) #fff #fff var(--shade);
}

.s1 { width: 96px; }
.s2 { width: 43px; }
.s3 { width: 34px; }
.s4 { width: 53px; }
.s5 { flex: 1; }
```
